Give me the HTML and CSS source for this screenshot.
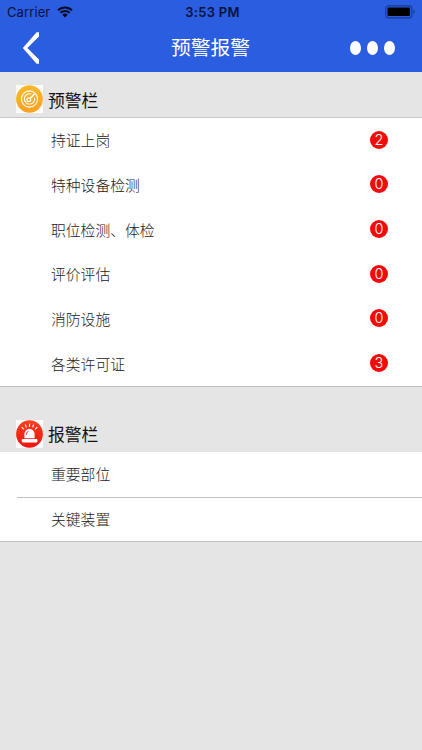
FILE: index.html
```html
<!DOCTYPE html>
<html lang="zh-CN">
<head>
    <meta charset="UTF-8">
    <meta name="viewport" content="width=device-width, initial-scale=1.0">
    <title>预警报警</title>
    <link rel="stylesheet" href="styles.css">
</head>
<body>
    <header class="header">
        <div class="status-bar">
            <div class="carrier">
                <span>Carrier</span>
                <svg class="wifi" width="16" height="12" viewBox="0 0 16 12">
                    <path d="M1 4.3a10 10 0 0 1 14 0M3.4 6.8a6.6 6.6 0 0 1 9.2 0" fill="none" stroke="#050b20" stroke-width="2"/>
                    <path d="M5.3 8.8a3.9 3.9 0 0 1 5.4 0L8 11.5z" fill="#050b20"/>
                </svg>
            </div>
            <span class="time">3:53 PM</span>
            <svg class="battery" width="30" height="14" viewBox="0 0 30 14">
                <rect x="0.8" y="0.8" width="26" height="12" rx="2.6" fill="none" stroke="#183b91" stroke-width="1.2"/>
                <rect x="2.5" y="2.5" width="22.5" height="8.6" rx="1" fill="#000"/>
                <path d="M28.4 4.8q1.5.5 1.5 2t-1.5 2z" fill="#183b91"/>
            </svg>
        </div>
        <div class="nav-bar">
            <a class="back" href="#">
                <svg width="17" height="32" viewBox="0 0 17 32">
                    <path d="M17 0.2v4.2L5.4 16 17 27.6v4.2h-2.4L0.8 16 14.6 0.2z" fill="#fff"/>
                </svg>
            </a>
            <h1>预警报警</h1>
            <div class="more">
                <i></i><i></i><i></i>
            </div>
        </div>
    </header>

    <section class="group">
        <h2 class="warning-title">
            <svg class="icon" width="27" height="28" viewBox="0 0 27 28">
                <defs>
                    <linearGradient id="amber" x1="0" y1="0" x2="0" y2="1">
                        <stop offset="0" stop-color="#fdb92a"/>
                        <stop offset="1" stop-color="#fba124"/>
                    </linearGradient>
                </defs>
                <rect width="27" height="28" fill="#fff"/>
                <ellipse cx="13.5" cy="14" rx="13.4" ry="13.8" fill="url(#amber)"/>
                <circle cx="13.5" cy="14" r="8.1" fill="none" stroke="#fff" stroke-width="1.1"/>
                <path d="M15.2 9.1a5.2 5.2 0 1 0 3.4 3.8" fill="none" stroke="#fff" stroke-width="1.1"/>
                <circle cx="12.8" cy="14.8" r="1.9" fill="none" stroke="#fff" stroke-width="1.2"/>
                <path d="M14.1 13.5l4.4-4.5" stroke="#fff" stroke-width="1.7"/>
            </svg>
            <span>预警栏</span>
        </h2>
        <ul class="list">
            <li>持证上岗<span class="badge">2</span></li>
            <li>特种设备检测<span class="badge">0</span></li>
            <li>职位检测、体检<span class="badge">0</span></li>
            <li>评价评估<span class="badge">0</span></li>
            <li>消防设施<span class="badge">0</span></li>
            <li>各类许可证<span class="badge">3</span></li>
        </ul>
    </section>

    <section class="group">
        <h2 class="alarm-title">
            <svg class="icon" width="27" height="28" viewBox="0 0 27 28">
                <defs>
                    <linearGradient id="red" x1="0" y1="0" x2="0" y2="1">
                        <stop offset="0" stop-color="#f8401f"/>
                        <stop offset="1" stop-color="#f1120f"/>
                    </linearGradient>
                </defs>
                <rect width="27" height="28" fill="#fff"/>
                <ellipse cx="13.5" cy="14" rx="13.4" ry="13.8" fill="url(#red)"/>
                <path d="M8.4 18.2v-4a5.1 5.1 0 0 1 10.2 0v4z" fill="#fff"/>
                <rect x="5.8" y="18.9" width="15.6" height="3.5" rx="0.8" fill="#fff"/>
                <path d="M10.3 14.8q0-2.9 2.2-3.5" fill="none" stroke="#f62a16" stroke-width="0.9"/>
                <path d="M13.5 3.8v3.2M9.3 4.5l1.1 2.9M17.7 4.5l-1.1 2.9M5.7 7.2l2.3 2.1M21.3 7.2L19 9.3" stroke="#fff" stroke-width="1.1"/>
            </svg>
            <span>报警栏</span>
        </h2>
        <ul class="list divided">
            <li>重要部位</li>
            <li>关键装置</li>
        </ul>
    </section>
</body>
</html>
```

FILE: styles.css
```css
* {
    box-sizing: border-box;
}

body {
    margin: 0;
    min-height: 100vh;
    background-color: #e5e5e5;
    font-family: "Liberation Sans", "Noto Sans CJK SC", sans-serif;
    color: #222;
}

.header {
    height: 72px;
    background-color: #2b5de0;
}

.status-bar {
    display: grid;
    grid-template-columns: 1fr auto 1fr;
    align-items: center;
    height: 24px;
    padding: 0 7px;
    font-family: Inter, sans-serif;
    font-size: 13px;
    color: #08133a;
}

.carrier {
    display: flex;
    align-items: center;
    gap: 7px;
    letter-spacing: 0.1px;
}

.time {
    padding-left: 3px;
    font-weight: 600;
    letter-spacing: 0.3px;
}

.battery {
    justify-self: end;
}

.nav-bar {
    display: grid;
    grid-template-columns: 1fr auto 1fr;
    align-items: center;
    height: 48px;
    padding: 0 27px 0 22px;
}

.back {
    display: flex;
}

.nav-bar h1 {
    margin: 0;
    padding-left: 4px;
    font-size: 19.8px;
    font-weight: 400;
    line-height: 48px;
    color: #fff;
}

.more {
    display: flex;
    justify-content: flex-end;
    gap: 6px;
}

.more i {
    width: 11px;
    height: 14px;
    border-radius: 50%;
    background-color: #fff;
}

.group h2 {
    display: flex;
    align-items: flex-end;
    gap: 5px;
    margin: 0;
    padding: 0 16px 4px;
    font-size: 16.8px;
    font-weight: 400;
    line-height: 24px;
    color: #111;
}

.group .warning-title {
    height: 45px;
}

.warning-title span {
    margin-bottom: -1px;
}

.group .alarm-title {
    height: 65px;
}

.list {
    margin: 0;
    padding: 0;
    list-style: none;
    background-color: #fff;
    border-top: 1px solid #c8c8c8;
    border-bottom: 1px solid #c0c0c0;
}

.list li {
    display: flex;
    align-items: center;
    justify-content: space-between;
    height: 44.67px;
    padding: 0 34px 1px 51px;
    font-size: 14.8px;
    font-weight: 300;
}

.badge {
    width: 18px;
    height: 18px;
    border-radius: 50%;
    background-color: #f50a0a;
    color: #fff;
    font-family: Inter, sans-serif;
    font-size: 14.5px;
    line-height: 18px;
    text-align: center;
}

.divided {
    border-top: none;
}

.divided li {
    padding-bottom: 2px;
}

.divided li + li {
    margin-left: 17px;
    padding-left: 34px;
    border-top: 1px solid #c0c0c0;
}
```
